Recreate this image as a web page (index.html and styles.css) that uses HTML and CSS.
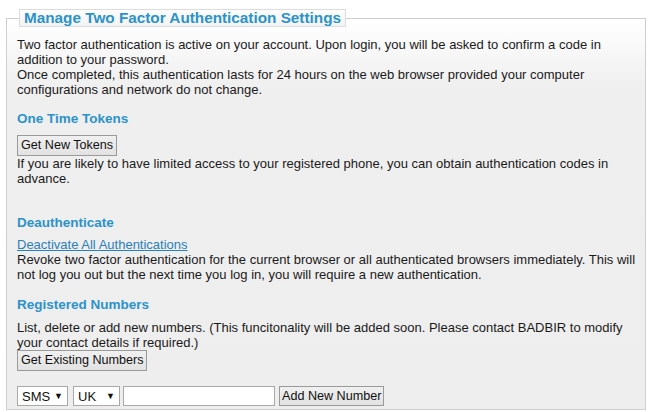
FILE: index.html
```html
<!DOCTYPE html>
<html>
<head>
<meta charset="utf-8">
<link rel="stylesheet" href="styles.css">
</head>
<body>
<fieldset class="panel">
  <legend class="panel-title">Manage Two Factor Authentication Settings</legend>
  <p class="intro">Two factor authentication is active on your account. Upon login, you will be asked to confirm a code in<br>addition to your password.<br>Once completed, this authentication lasts for 24 hours on the web browser provided your computer<br>configurations and network do not change.</p>

  <h3 class="section-title first">One Time Tokens</h3>
  <button class="btn" type="button">Get New Tokens</button>
  <p class="text">If you are likely to have limited access to your registered phone, you can obtain authentication codes in<br>advance.</p>

  <h3 class="section-title deauth">Deauthenticate</h3>
  <a class="link" href="#">Deactivate All Authentications</a>
  <p class="text">Revoke two factor authentication for the current browser or all authenticated browsers immediately. This will<br>not log you out but the next time you log in, you will require a new authentication.</p>

  <h3 class="section-title reg">Registered Numbers</h3>
  <p class="text">List, delete or add new numbers. (This funcitonality will be added soon. Please contact BADBIR to modify<br>your contact details if required.)</p>
  <button class="btn" type="button">Get Existing Numbers</button>

  <div class="add-row">
    <span class="select sms">SMS<span class="arrow">▼</span></span>
    <span class="select uk">UK<span class="arrow">▼</span></span>
    <input class="number" type="text">
    <button class="btn add" type="button">Add New Number</button>
  </div>
</fieldset>
</body>
</html>
```

FILE: styles.css
```css
html, body {
  margin: 0;
  padding: 0;
  background: #ffffff;
}
body {
  padding: 0 6px 0 6px;
  font-family: "Liberation Sans", Arial, sans-serif;
  font-size: 13px;
  line-height: 15px;
  color: #1a1a1a;
}
.panel {
  margin: 9px 0 0 0;
  padding: 0 10px 3px 10px;
  border: 1px solid #cfcfcf;
  background: linear-gradient(to bottom, #ffffff 0px, #efefef 70px, #eeeeee 100%);
  box-sizing: border-box;
  width: 640px;
  min-width: 0;
}
.panel-title {
  margin-left: 2px;
  padding: 0 4px 0 4px;
  border: 1px solid #dcdcdc;
  background: linear-gradient(to bottom, #fdfdfd, #f3f3f3);
  color: #2b93c9;
  font-weight: bold;
  font-size: 15.3px;
  line-height: 16px;
}
.intro {
  margin: 10px 0 0 0;
  white-space: nowrap;
}
.section-title {
  margin: 0;
  color: #2b93c9;
  font-size: 13.5px;
  line-height: 16px;
  font-weight: bold;
}
.section-title.first { margin-top: 14px; margin-bottom: 8px; }
.section-title.deauth { margin-top: 29px; margin-bottom: 6px; }
.section-title.reg { margin-top: 15px; margin-bottom: 7px; }
.text {
  margin: 0;
  white-space: nowrap;
}
.btn {
  display: block;
  height: 21px;
  margin: 0;
  padding: 0 3px;
  border: 1px solid #9a9a9a;
  border-radius: 0;
  background: linear-gradient(to bottom, #f0f0f0, #e2e2e2);
  font-family: "Liberation Sans", Arial, sans-serif;
  font-size: 12.6px;
  color: #111;
  line-height: 17px;
}
.link {
  display: block;
  color: #2a80b9;
  text-decoration: underline;
}
.add-row {
  display: flex;
  align-items: center;
  gap: 5px;
  margin-top: 15px;
}
.select {
  display: flex;
  align-items: center;
  justify-content: space-between;
  box-sizing: border-box;
  height: 20px;
  padding: 0 4px 0 4px;
  background: #fff;
  border: 1px solid #a9a9a9;
  font-size: 13px;
  color: #111;
}
.select .arrow {
  font-size: 9px;
  line-height: 10px;
}
.sms { width: 51px; }
.uk { width: 47px; }
.number {
  box-sizing: border-box;
  width: 152px;
  height: 20px;
  margin: 0 0 0 -2px;
  border: 1px solid #a9a9a9;
  background: #fff;
  padding: 0 2px;
}
.btn.add {
  height: 20px;
  line-height: 16px;
  padding: 0 2px;
  margin-left: -1px;
}
```
